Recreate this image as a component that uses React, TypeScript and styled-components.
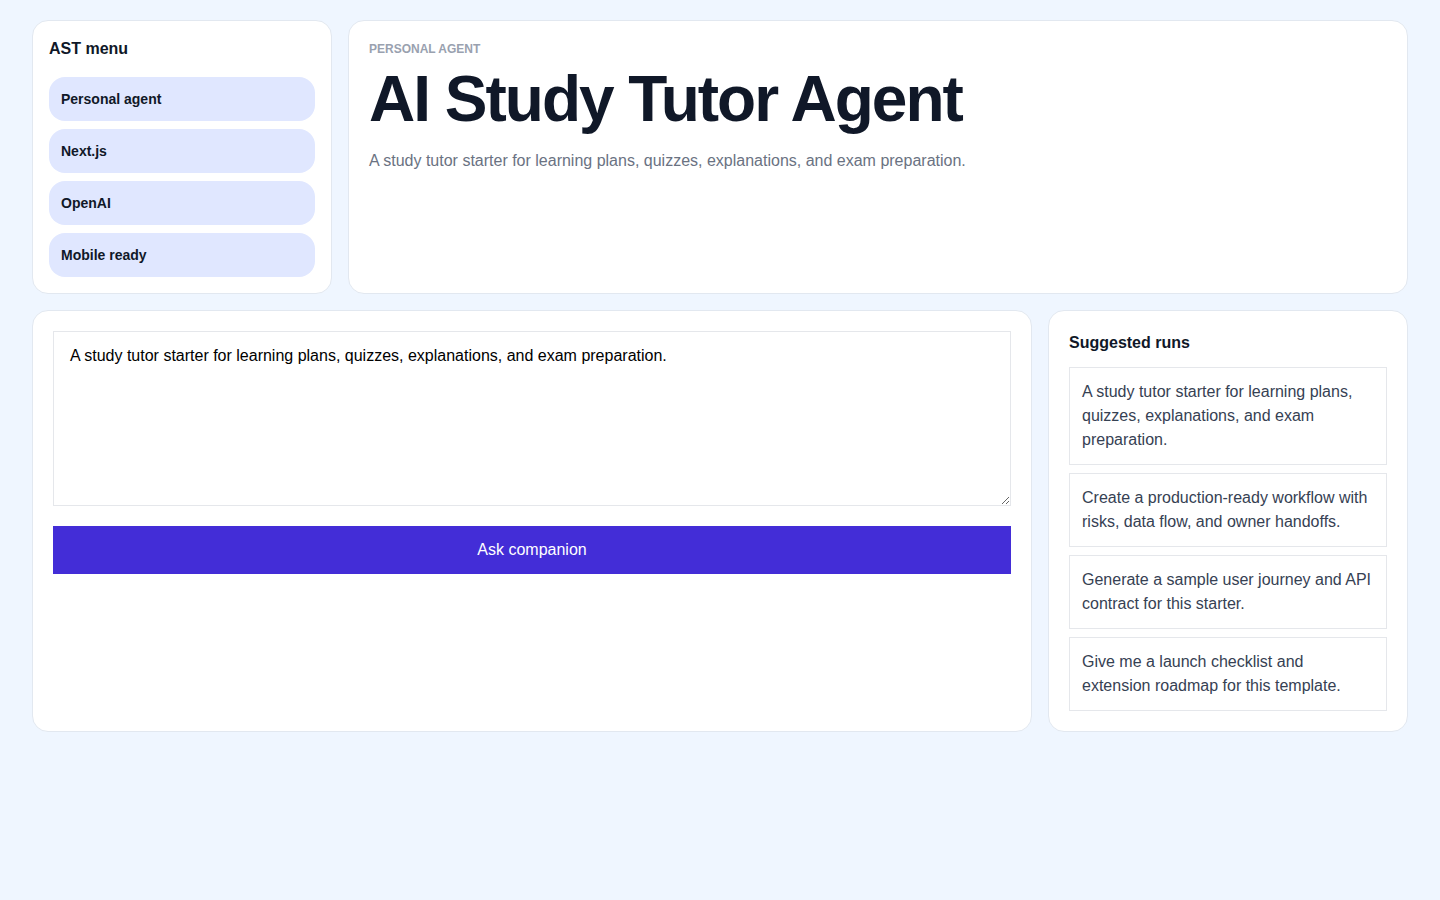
import React from "react";
import styled, { createGlobalStyle } from "styled-components";

const suggestions = [
  "A study tutor starter for learning plans, quizzes, explanations, and exam preparation.",
  "Create a production-ready workflow with risks, data flow, and owner handoffs.",
  "Generate a sample user journey and API contract for this starter.",
  "Give me a launch checklist and extension roadmap for this template.",
];

const menu = ["Personal agent", "Next.js", "OpenAI", "Mobile ready"];

const GlobalStyle = createGlobalStyle`
  * {
    box-sizing: border-box;
  }
  html, body {
    margin: 0;
    background: #eff6ff;
    font-family: "Liberation Sans", Arial, sans-serif;
    color: #101828;
  }
`;

const Page = styled.main`
  min-height: 100vh;
  padding: 20px 32px;
  display: flex;
  flex-direction: column;
  gap: 16px;
`;

const Row = styled.div<{ $cols: string }>`
  display: grid;
  grid-template-columns: ${({ $cols }) => $cols};
  gap: 16px;
  align-items: stretch;
`;

const Card = styled.section<{ $pad?: number }>`
  background: #ffffff;
  border: 1px solid #e2e8f0;
  border-radius: 16px;
  padding: ${({ $pad }) => $pad ?? 20}px;
`;

const CardTitle = styled.h2<{ $gap: number }>`
  margin: 0 0 ${({ $gap }) => $gap}px;
  font-size: 16px;
  line-height: 24px;
  font-weight: 700;
  color: #101828;
`;

const MenuList = styled.nav`
  display: flex;
  flex-direction: column;
  gap: 8px;
`;

const Pill = styled.div`
  height: 44px;
  display: flex;
  align-items: center;
  padding: 0 12px;
  background: #e0e7ff;
  border-radius: 16px;
  font-size: 14px;
  font-weight: 700;
  color: #101828;
`;

const Eyebrow = styled.p`
  margin: 0 0 10px;
  font-size: 12px;
  line-height: 16px;
  font-weight: 700;
  text-transform: uppercase;
  color: #99a1af;
`;

const Headline = styled.h1`
  margin: 0 0 18px;
  font-size: 64px;
  line-height: 64px;
  font-weight: 700;
  letter-spacing: -2px;
  color: #101828;
`;

const Lead = styled.p`
  margin: 0;
  font-size: 16px;
  line-height: 24px;
  color: #6a7282;
`;

const Prompt = styled.textarea`
  display: block;
  width: 100%;
  height: 175px;
  padding: 12px 16px;
  border: 1px solid #e5e7eb;
  border-radius: 0;
  font-family: "Liberation Sans", Arial, sans-serif;
  font-size: 16px;
  line-height: 24px;
  color: #000000;
  outline: none;
`;

const AskButton = styled.button`
  display: block;
  width: 100%;
  height: 48px;
  margin-top: 20px;
  border: 0;
  border-radius: 0;
  background: #432dd7;
  color: #ffffff;
  font-family: "Liberation Sans", Arial, sans-serif;
  font-size: 16px;
  cursor: pointer;
`;

const RunList = styled.div`
  display: flex;
  flex-direction: column;
  gap: 8px;
`;

const RunItem = styled.button`
  display: block;
  width: 100%;
  padding: 12px;
  text-align: left;
  background: #ffffff;
  border: 1px solid #e5e7eb;
  border-radius: 0;
  font-family: "Liberation Sans", Arial, sans-serif;
  font-size: 16px;
  line-height: 24px;
  color: #364153;
  cursor: pointer;
`;

export default function App() {
  return (
    <>
      <GlobalStyle />
      <Page>
        <Row $cols="300px 1fr">
          <Card $pad={16}>
            <CardTitle $gap={16}>AST menu</CardTitle>
            <MenuList>
              {menu.map((item) => (
                <Pill key={item}>{item}</Pill>
              ))}
            </MenuList>
          </Card>
          <Card>
            <Eyebrow>Personal agent</Eyebrow>
            <Headline>AI Study Tutor Agent</Headline>
            <Lead>
              A study tutor starter for learning plans, quizzes, explanations,
              and exam preparation.
            </Lead>
          </Card>
        </Row>
        <Row $cols="1fr 360px">
          <Card>
            <Prompt defaultValue="A study tutor starter for learning plans, quizzes, explanations, and exam preparation." />
            <AskButton>Ask companion</AskButton>
          </Card>
          <Card>
            <CardTitle $gap={12}>Suggested runs</CardTitle>
            <RunList>
              {suggestions.map((s) => (
                <RunItem key={s}>{s}</RunItem>
              ))}
            </RunList>
          </Card>
        </Row>
      </Page>
    </>
  );
}
